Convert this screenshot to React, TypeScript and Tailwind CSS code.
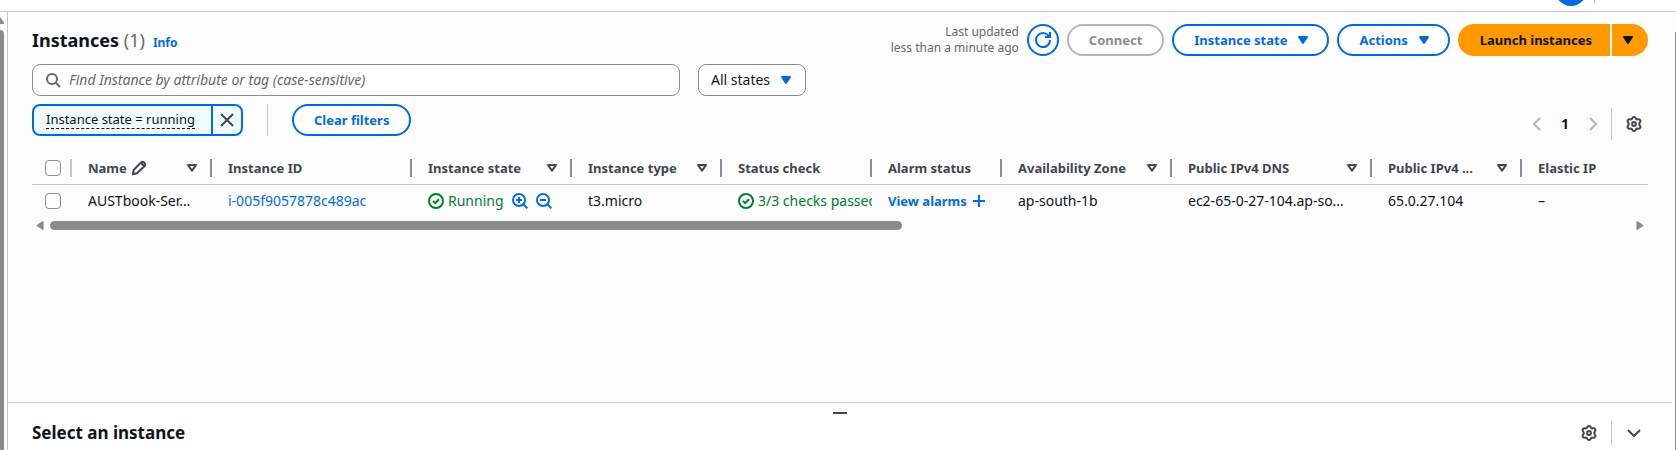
import type { ReactNode } from "react";

function Icon({ children, className = "" }: { children: ReactNode; className?: string }) {
  return (
    <svg viewBox="0 0 16 16" aria-hidden="true" fill="none" stroke="currentColor" strokeWidth="2" strokeLinejoin="round" className={`size-4 shrink-0 ${className}`}>
      {children}
    </svg>
  );
}

const CaretFilled = ({ className = "" }: { className?: string }) => (
  <Icon className={className}>
    <path d="M4 5h8l-4 6z" fill="currentColor" />
  </Icon>
);

const SortCaret = () => (
  <Icon className="text-[#424650]">
    <path d="M4 5h8l-4 5.6z" />
  </Icon>
);

const Gear = () => (
  <Icon className="text-[#424650]">
    <circle cx="8" cy="8" r="1.9" />
    <path d="M6.200 2.200C6.700.6 9.300.6 9.800 2.200c.3 1 1.200 1.400 2.100 1.100 1.800-.6 3.200 1.500 2.100 2.800-.9 1.100-.9 2.700 0 3.800 1.100 1.300-.3 3.400-2.100 2.800-.9-.3-1.800.1-2.100 1.100-.5 1.600-3.100 1.600-3.600 0-.3-1-1.200-1.400-2.100-1.100-1.800.6-3.200-1.500-2.100-2.800.9-1.100.9-2.700 0-3.800C.9 4.800 2.300 2.700 4.100 3.300c.9.3 1.800-.1 2.100-1.100z" />
  </Icon>
);

const Check = () => (
  <Icon>
    <circle cx="8" cy="8" r="7" />
    <path d="m5 8 2.200 2.200 3.800-3.900" strokeLinejoin="miter" />
  </Icon>
);

function ZoomIcon({ plus }: { plus?: boolean }) {
  return (
    <Icon>
      <circle cx="7" cy="7" r="6" />
      <path d="m15.300 15.300-4-4M4 7h6" />
      {plus && <path d="M7 4v6" />}
    </Icon>
  );
}

const outline =
  "flex h-8 shrink-0 items-center justify-center gap-2 rounded-full border-2 border-[#006ce0] bg-white pl-5 font-bold text-[#006ce0]";

type Column = { title: string; width: string; sort?: boolean; edit?: boolean };

const columns: Column[] = [
  { title: "Name", width: "w-[140px]", sort: true, edit: true },
  { title: "Instance ID", width: "w-[200px]" },
  { title: "Instance state", width: "w-[160px]", sort: true },
  { title: "Instance type", width: "w-[150px]", sort: true },
  { title: "Status check", width: "w-[150px]" },
  { title: "Alarm status", width: "w-[130px]" },
  { title: "Availability Zone", width: "w-[170px]", sort: true },
  { title: "Public IPv4 DNS", width: "w-[200px]", sort: true },
  { title: "Public IPv4 ...", width: "w-[150px]", sort: true },
  { title: "Elastic IP", width: "" },
];

const checkbox = "block size-4 appearance-none rounded-[4px] border border-[#8c8c94] bg-white checked:bg-[#006ce0]";

function Header() {
  return (
    <header className="flex items-center justify-between">
      <div className="flex items-baseline gap-2">
        <h1 className="text-lg leading-6 font-bold">
          Instances <span className="font-normal text-[#656871]">(1)</span>
        </h1>
        <a href="#info" className="text-xs font-bold text-[#006ce0]">Info</a>
      </div>
      <div className="flex items-center gap-2">
        <p className="text-right text-xs leading-4 text-[#656871]">
          Last updated
          <br />
          less than a minute ago
        </p>
        <button aria-label="Refresh" className="flex size-8 items-center justify-center rounded-full border-2 border-[#006ce0] bg-white text-[#006ce0]">
          <Icon>
            <path d="M10 5h5V0" strokeLinejoin="miter" />
            <path d="M15 8a7 7 0 1 1-.7-3" />
          </Icon>
        </button>
        <button disabled className="h-8 rounded-full border-2 border-[#b4b4bb] bg-white px-5 font-bold text-[#8c8c94]">Connect</button>
        <button className={`${outline} pr-4`}>Instance state <CaretFilled /></button>
        <button className={`${outline} pr-4`}>Actions <CaretFilled /></button>
        <div className="flex gap-0.5">
          <button className="h-8 rounded-l-full border-2 border-[#ff9900] bg-[#ff9900] pr-4 pl-5 font-bold">Launch instances</button>
          <button aria-label="More launch options" className="flex h-8 w-9 items-center rounded-r-full bg-[#ff9900] pl-2">
            <CaretFilled />
          </button>
        </div>
      </div>
    </header>
  );
}

function Filters() {
  return (
    <>
      <div className="mt-2 flex gap-[18px] text-sm">
        <label className="flex h-8 w-[648px] items-center gap-2 rounded-lg border border-[#8c8c94] bg-white px-3">
          <Icon className="text-[#656871]">
            <circle cx="7" cy="7" r="5" />
            <path d="m15 15-4.500-4.500" />
          </Icon>
          <input
            aria-label="Find Instance by attribute or tag"
            placeholder="Find Instance by attribute or tag (case-sensitive)"
            className="min-w-0 flex-1 bg-transparent outline-none placeholder:text-[#656871] placeholder:italic"
          />
        </label>
        <div className="relative">
          <select aria-label="Instance states" className="h-8 w-[108px] appearance-none rounded-lg border border-[#8c8c94] bg-white px-3">
            <option>All states</option>
          </select>
          <CaretFilled className="pointer-events-none absolute top-2 right-3 text-[#006ce0]" />
        </div>
      </div>
      <div className="mt-2 flex items-start justify-between">
        <div className="flex items-center gap-6">
          <div className="flex h-8 items-stretch rounded-lg border-2 border-[#006ce0] bg-[#f0fbff]">
            <button className="flex items-center pr-4 pl-3">
              <span className="border-b border-dashed border-[#0f141a] leading-[17px]">Instance state = running</span>
            </button>
            <button aria-label="Remove filter" className="flex w-[30px] items-center justify-center border-l-2 border-[#006ce0] text-[#424650]">
              <Icon>
                <path d="m2 2 12 12M14 2 2 14" />
              </Icon>
            </button>
          </div>
          <div className="h-8 w-px bg-[#c6c6cd]" />
          <button className={`${outline} pr-5`}>Clear filters</button>
        </div>
        <div className="flex items-center pt-1">
          <nav aria-label="Pages" className="flex items-center">
            <button disabled aria-label="Previous page" className="text-[#b4b4bb]">
              <Icon><path d="M11 2 5 8l6 6" strokeLinejoin="miter" /></Icon>
            </button>
            <button aria-current="page" className="w-10 text-center text-sm font-bold">1</button>
            <button disabled aria-label="Next page" className="text-[#b4b4bb]">
              <Icon><path d="m5 2 6 6-6 6" strokeLinejoin="miter" /></Icon>
            </button>
          </nav>
          <div className="mr-2 ml-[10px] h-8 w-px bg-[#c6c6cd]" />
          <button aria-label="Preferences" className="mx-1 p-0.5"><Gear /></button>
        </div>
      </div>
    </>
  );
}

function InstanceTable() {
  return (
    <div className="mt-3">
      <div className="overflow-x-hidden">
        <table className="w-full table-fixed border-collapse text-left">
          <thead>
            <tr className="h-8 border-b border-[#c6c6cd] text-[#424650]">
              <th className="w-10 p-0">
                <div className="flex h-[18px] items-center justify-between border-r-2 border-[#c6c6cd] pl-[13px]">
                  <input type="checkbox" aria-label="Select all instances" className={checkbox} />
                </div>
              </th>
              {columns.map((c, i) => (
                <th key={c.title} className={`p-0 ${c.width}`}>
                  <div className={`flex h-[18px] items-center pr-[10px] pl-4 ${i < columns.length - 1 ? "border-r-2 border-[#8c8c94]" : ""}`}>
                    <span className="whitespace-nowrap">{c.title}</span>
                    {c.edit && (
                      <Icon className="ml-1">
                        <path d="m10 3 3.500 3.500M1.800 14.200l.9-4.200L10 2.400c2-1.900 5.600 1.600 3.600 3.600L6 13.300z" />
                      </Icon>
                    )}
                    {c.sort && <button aria-label={`Sort by ${c.title}`} className="ml-auto"><SortCaret /></button>}
                  </div>
                </th>
              ))}
            </tr>
          </thead>
          <tbody className="text-sm">
            <tr className="h-[34px] whitespace-nowrap [&>td]:overflow-hidden [&>td]:py-0 [&>td]:pr-0 [&>td]:pl-4">
              <td className="pl-[13px]!">
                <input type="checkbox" aria-label="Select AUSTbook-Server" className={checkbox} />
              </td>
              <td>AUSTbook-Ser…</td>
              <td><a href="#instance" className="text-[#006ce0]">i-005f9057878c489ac</a></td>
              <td>
                <div className="flex items-center gap-1 text-[#00802f]">
                  <Check />
                  Running
                  <span className="ml-1 flex gap-2 text-[#006ce0]">
                    <button aria-label="Filter by this value"><ZoomIcon plus /></button>
                    <button aria-label="Exclude this value"><ZoomIcon /></button>
                  </span>
                </div>
              </td>
              <td>t3.micro</td>
              <td>
                <div className="flex items-center gap-1 overflow-hidden text-[#00802f]"><Check />3/3 checks passed</div>
              </td>
              <td>
                <a href="#alarms" className="flex items-center gap-1 text-[13px] font-bold text-[#006ce0]">
                  View alarms
                  <Icon><path d="M8 2v12M2 8h12" /></Icon>
                </a>
              </td>
              <td>ap-south-1b</td>
              <td>ec2-65-0-27-104.ap-so…</td>
              <td>65.0.27.104</td>
              <td>–</td>
            </tr>
          </tbody>
        </table>
      </div>
      <div className="mt-[3px] flex h-[9px] items-center gap-1.5 px-1 text-[#8b8b8b]">
        <svg viewBox="0 0 8 10" aria-hidden="true" className="h-[9px] w-2" fill="currentColor"><path d="M7 0q1 0 1 1v8q0 1-1 1L.5 5.600q-.6-.6 0-1.200z" /></svg>
        <div className="flex-1"><div className="h-[9px] w-[53.9%] rounded-full bg-[#8b8b8b]" /></div>
        <svg viewBox="0 0 8 10" aria-hidden="true" className="h-[9px] w-2" fill="currentColor"><path d="M1 0Q0 0 0 1v8q0 1 1 1l6.500-4.400q.6-.6 0-1.200z" /></svg>
      </div>
    </div>
  );
}

export default function App() {
  return (
    <div className="flex h-screen flex-col overflow-hidden bg-white font-['Noto_Sans','Open_Sans',sans-serif] text-[13px] leading-5 text-[#0f141a]">
      <div className="flex h-3 shrink-0 items-end justify-end gap-[7px] border-b border-[#c6c6cd] pr-[81px]">
        <div className="flex h-full items-end overflow-hidden pb-[5px]"><div className="size-8 rounded-full bg-[#006ce0]" /></div>
        <div className="mb-2 h-[3px] w-px bg-[#c6c6cd]" />
      </div>
      <div className="flex min-h-0 flex-1 bg-[#fcfcfd]">
        <div className="flex w-2 shrink-0 flex-col border-r border-[#c6c6cd] pt-[5px]">
          <svg viewBox="0 0 4 7" aria-hidden="true" className="h-[7px] w-1" fill="#8b8b8b"><path d="M0 0 4 5.500V7H0z" /></svg>
          <div className="mt-1.5 w-1 flex-1 rounded-tr bg-[#8b8b8b]" />
        </div>
        <div className="flex min-w-0 flex-1 flex-col">
          <main className="min-h-0 flex-1 pt-3 pr-6 pl-6">
            <Header />
            <Filters />
            <InstanceTable />
          </main>
          <section className="h-12 shrink-0 border-t border-[#c6c6cd] bg-white px-6">
            <div className="flex h-[18px] justify-center pt-[9px]">
              <button aria-label="Resize panel" className="h-0.5 w-3.5 bg-[#424650]" />
            </div>
            <div className="flex items-center justify-between">
              <h2 className="text-[17px] leading-6 font-bold">Select an instance</h2>
              <div className="flex items-center">
                <button aria-label="Panel preferences"><Gear /></button>
                <div className="mx-[14px] h-6 w-px bg-[#c6c6cd]" />
                <button aria-label="Open panel" className="mr-1.5 text-[#424650]">
                  <Icon><path d="m2 5 6 6 6-6" strokeLinejoin="miter" /></Icon>
                </button>
              </div>
            </div>
          </section>
        </div>
        <div className="w-1 shrink-0 pt-5"><div className="ml-[3px] h-full w-px bg-[#8b8b8b]" /></div>
      </div>
    </div>
  );
}
